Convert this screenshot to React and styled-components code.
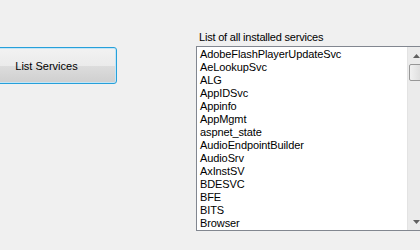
import React from "react";
import styled, { createGlobalStyle } from "styled-components";

const GlobalStyle = createGlobalStyle`
  html, body {
    margin: 0;
    padding: 0;
    background: #f0f0f0;
    overflow: hidden;
  }
  body {
    font-family: "Liberation Sans", Arial, sans-serif;
    font-size: 11px;
    color: #000;
  }
`;

const services = [
  "AdobeFlashPlayerUpdateSvc",
  "AeLookupSvc",
  "ALG",
  "AppIDSvc",
  "Appinfo",
  "AppMgmt",
  "aspnet_state",
  "AudioEndpointBuilder",
  "AudioSrv",
  "AxInstSV",
  "BDESVC",
  "BFE",
  "BITS",
  "Browser",
];

const Form = styled.div`
  display: flex;
  align-items: flex-start;
  width: 420px;
  height: 250px;
  overflow: hidden;
`;

const Button = styled.button`
  flex: none;
  margin: 47px 0 0 -24px;
  width: 141px;
  height: 37px;
  border: 1px solid #26a0da;
  border-radius: 3px;
  box-shadow: inset 0 0 0 1px #c4e5f6;
  background: linear-gradient(
    to bottom,
    #f2f2f2 0%,
    #ebebeb 50%,
    #dddddd 50%,
    #cfcfcf 100%
  );
  font-family: "Liberation Sans", Arial, sans-serif;
  font-size: 11px;
  color: #000;
  padding: 0;
`;

const Group = styled.div`
  flex: none;
  margin: 31px 0 0 79px;
  display: flex;
  flex-direction: column;
`;

const Label = styled.div`
  height: 15px;
  line-height: 13px;
  padding-left: 3px;
  letter-spacing: -0.2px;
`;

const ListBox = styled.div`
  display: flex;
  width: 240px;
  height: 183px;
  border: 1px solid #828790;
  background: #fff;
`;

const Items = styled.ul`
  flex: 1;
  list-style: none;
  margin: 0;
  padding: 1px 0 0 3px;
`;

const Item = styled.li`
  height: 13px;
  line-height: 13px;
  white-space: nowrap;
  letter-spacing: -0.1px;
`;

const ScrollBar = styled.div`
  width: 17px;
  margin-right: 12px;
  display: flex;
  flex-direction: column;
  background: #ebebeb;
  border-left: 1px solid #e3e3e3;
`;

const Arrow = styled.div`
  height: 17px;
  display: flex;
  align-items: center;
  justify-content: center;
`;

const Thumb = styled.div`
  height: 15px;
  margin: 0 0 0 1px;
  border: 1px solid #979797;
  border-radius: 2px;
  background: linear-gradient(to right, #f1f1f1, #d8d8d8);
`;

const Track = styled.div`
  flex: 1;
`;

const Tri = ({ up }) => (
  <svg width="7" height="4" viewBox="0 0 7 4">
    <path d={up ? "M3.5 0 L7 4 L0 4 Z" : "M0 0 L7 0 L3.5 4 Z"} fill="#606060" />
  </svg>
);

export default function App() {
  return (
    <>
      <GlobalStyle />
      <Form>
        <Button>List Services</Button>
        <Group>
          <Label>List of all installed services</Label>
          <ListBox>
            <Items>
              {services.map((s) => (
                <Item key={s}>{s}</Item>
              ))}
            </Items>
            <ScrollBar>
              <Arrow>
                <Tri up />
              </Arrow>
              <Thumb />
              <Track />
              <Arrow>
                <Tri />
              </Arrow>
            </ScrollBar>
          </ListBox>
        </Group>
      </Form>
    </>
  );
}
